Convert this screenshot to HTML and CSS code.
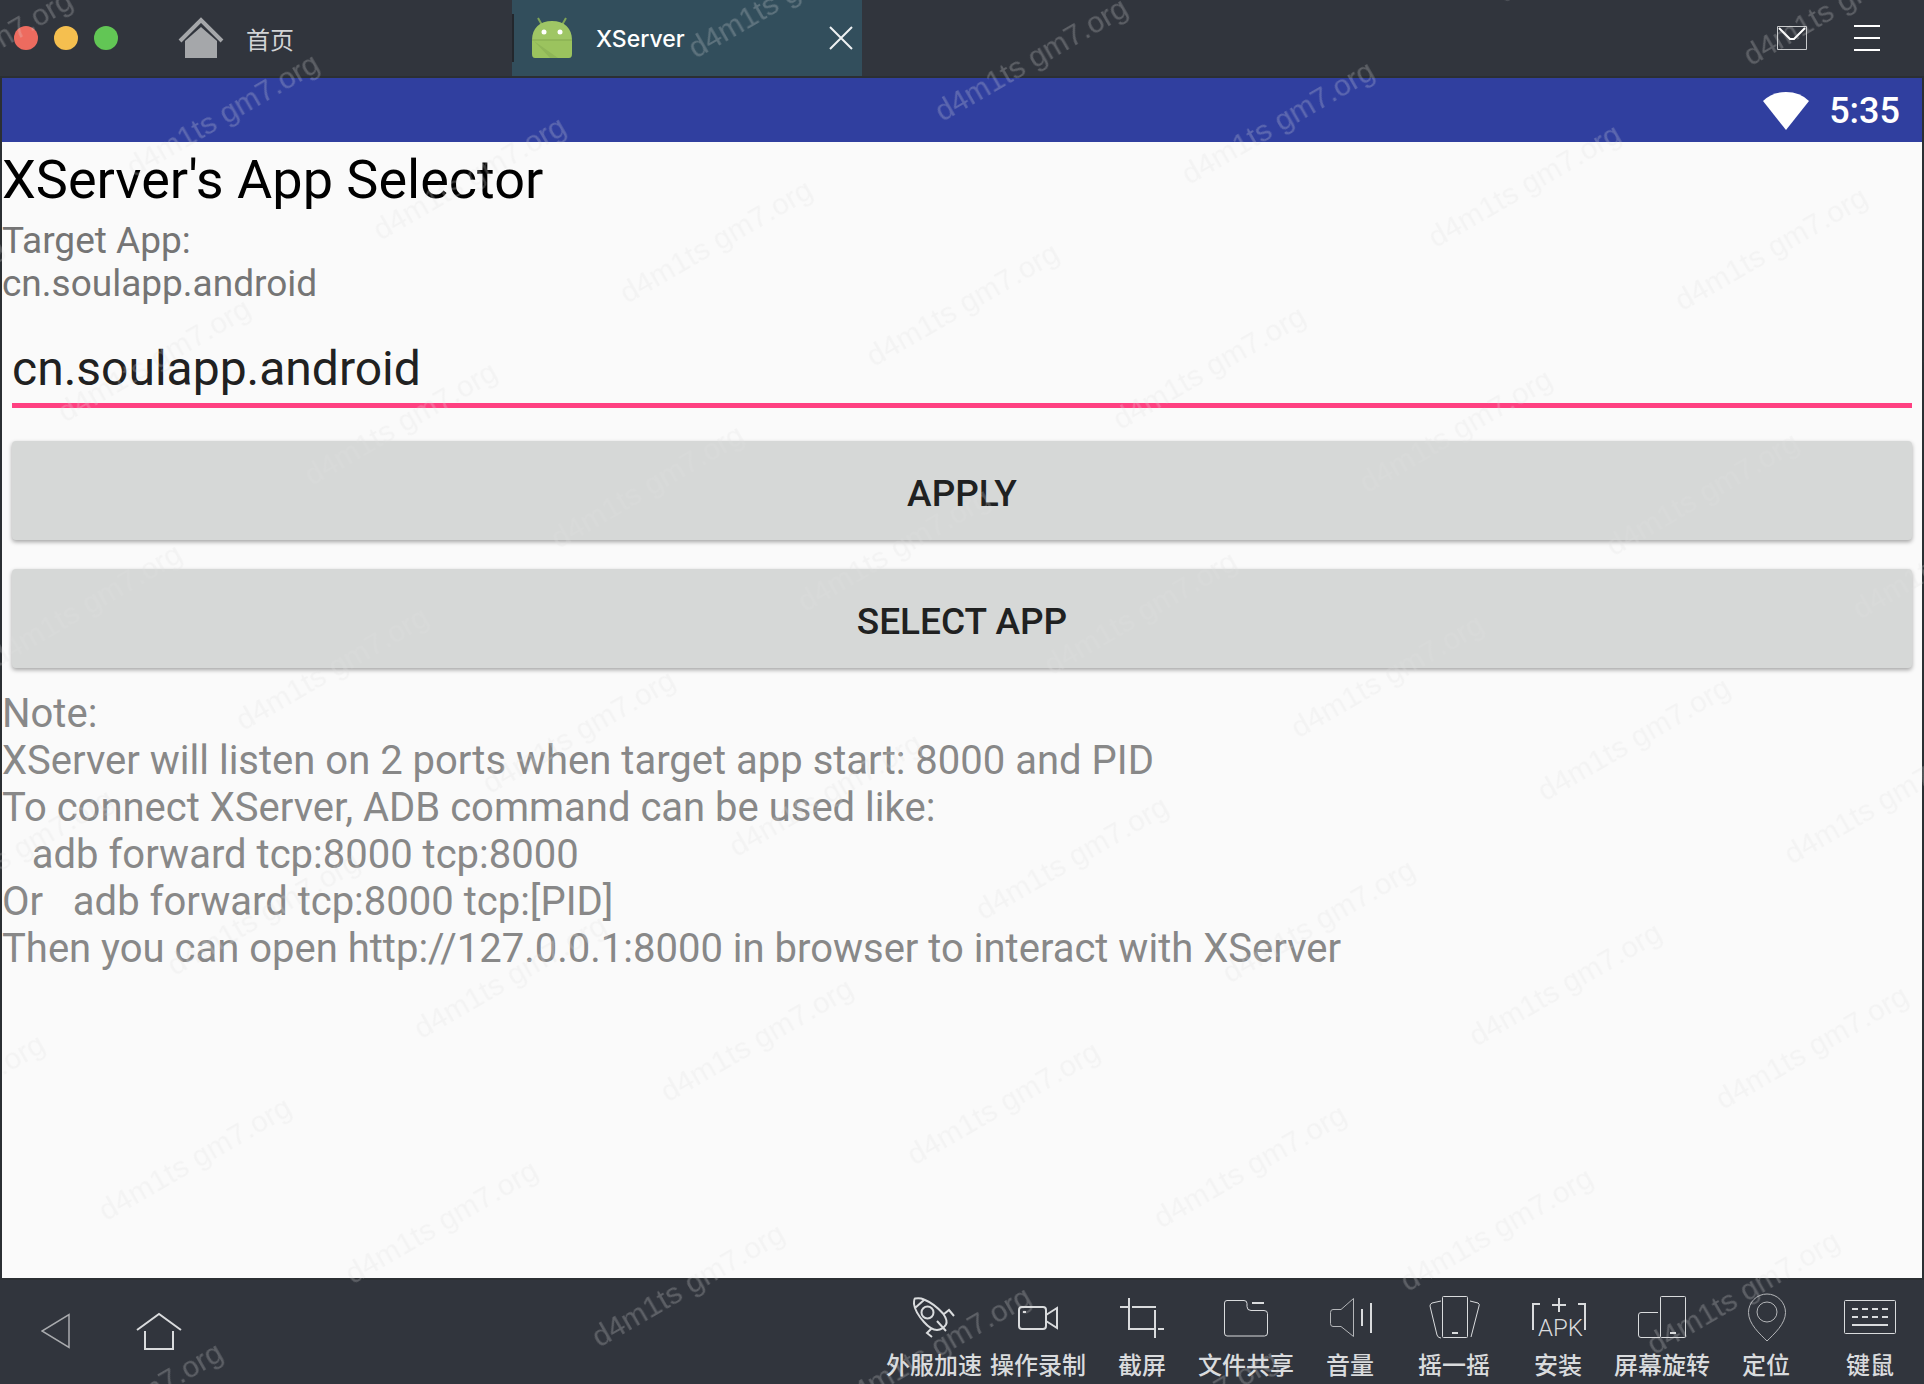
FILE: index.html
```html
<!DOCTYPE html>
<html lang="zh-CN">
<head>
<meta charset="utf-8">
<meta name="viewport" content="width=device-width, initial-scale=1">
<title>XServer</title>
<link rel="stylesheet" href="styles.css">
</head>
<body>
<header class="titlebar">
  <div class="lights">
    <button class="light light-close" aria-label="Close window"></button>
    <button class="light light-min" aria-label="Minimize window"></button>
    <button class="light light-max" aria-label="Zoom window"></button>
  </div>
  <nav class="tabs">
    <a class="tab tab-home" href="#">
      <svg width="46" height="42" viewBox="0 0 46 42" aria-hidden="true"><path d="M7 24 23 10l16 14v17H7z" fill="#a5a7aa"/><path d="M2 24 23 3l21 21" fill="none" stroke="#a5a7aa" stroke-width="4"/></svg>
      <span>首页</span>
    </a>
    <div class="tab tab-active">
      <svg width="40" height="42" viewBox="0 0 40 42" aria-hidden="true"><path d="M6 1l4 7M34 1l-4 7" stroke="#7fa457" stroke-width="2"/><path d="M0 23C0 11 8 4 20 4s20 7 20 19z" fill="#9fc665"/><path d="M0 23h40v14q0 4-3 4H3q-3 0-3-4z" fill="#9bc35e"/><path d="M2 24l16 17h8z" fill="#8fb657"/><path d="M0 23h40" stroke="#83a94f"/><circle cx="12" cy="15" r="2.500" fill="#fff"/><circle cx="28" cy="15" r="2.500" fill="#fff"/></svg>
      <span class="tab-name">XServer</span>
      <button class="icon-button" aria-label="Close tab"><svg width="24" height="24" viewBox="0 0 24 24"><path d="M1 1l22 22M23 1 1 23" stroke="#eef1f3" stroke-width="2"/></svg></button>
    </div>
  </nav>
  <div class="window-actions">
    <button class="icon-button" aria-label="Messages"><svg width="30" height="24" viewBox="0 0 30 24"><path d="M.5.5h29v23H.5z" fill="none" stroke="#c8cacc"/><path d="M2 2l11 11h4L28 2" fill="none" stroke="#fff" stroke-width="2"/></svg></button>
    <button class="icon-button" aria-label="Menu"><svg width="26" height="26" viewBox="0 0 26 26"><path d="M0 1h26M0 13h26M0 25h26" stroke="#fff" stroke-width="2"/></svg></button>
  </div>
</header>

<main class="screen">
  <div class="statusbar">
    <svg width="46" height="38" viewBox="0 0 46 38" aria-hidden="true"><path d="M0 9Q9 0 23 0t23 9L23 38z" fill="#fff"/></svg>
    <time>5:35</time>
  </div>
  <form class="app">
    <h1>XServer's App Selector</h1>
    <label class="target" for="target">Target App:<br>cn.soulapp.android</label>
    <input class="target-input" id="target" type="text" value="cn.soulapp.android" spellcheck="false">
    <div class="actions">
      <button class="action" type="button">APPLY</button>
      <button class="action" type="button">SELECT APP</button>
    </div>
    <p class="note">Note:
XServer will listen on 2 ports when target app start: 8000 and PID
To connect XServer, ADB command can be used like:
   adb forward tcp:8000 tcp:8000
Or   adb forward tcp:8000 tcp:[PID]
Then you can open http://127.0.0.1:8000 in browser to interact with XServer</p>
  </form>
</main>

<footer class="toolbar">
  <div class="nav-keys">
    <button class="icon-button" aria-label="Back"><svg width="30" height="36" viewBox="0 0 30 36"><path d="M28 1.500v33L1 18z" fill="none" stroke="#a9abae" stroke-width="1.500"/></svg></button>
    <button class="icon-button" aria-label="Home"><svg width="46" height="38" viewBox="0 0 46 38"><path d="M1 18 23 2l22 16M9 19v18h28V19" fill="none" stroke="#d9dbdd" stroke-width="2"/></svg></button>
  </div>
  <div class="tools">
    <button class="tool"><svg class="tool-icon bold" viewBox="0 0 52 52"><path d="M7 6.500q5-1 9 1 10 4 19 14 5 7 3 11-3 5-9 5.500-6 0-13-8Q7 20 6 12 6 7 7 6.500zM7 16l9-8M36 22l5-4 5 6M23 37l-4 4 5 4M29 29l9 10"/><circle cx="19.500" cy="20.500" r="6"/></svg><span>外服加速</span></button>
    <button class="tool"><svg class="tool-icon bold" viewBox="0 0 52 52"><rect x="7" y="15" width="27" height="22" rx="3"/><path d="M34 23l11-7v20l-11-7M11 20h3"/></svg><span>操作录制</span></button>
    <button class="tool"><svg class="tool-icon bold" viewBox="0 0 52 52"><path d="M13 6v31h26M4 15h9M16 15h24M39 18v28M42 37h6"/></svg><span>截屏</span></button>
    <button class="tool"><svg class="tool-icon" viewBox="0 0 52 52"><path d="M7 8.500h17q3 0 3 3v3q0 4 4 4h13q3.500 0 3.500 3V41q0 3-3 3H7q-2.500 0-2.500-3V11q0-2.500 2.500-2.500z"/><path class="thick" d="M32 11h12"/></svg><span>文件共享</span></button>
    <button class="tool"><svg class="tool-icon" viewBox="0 0 52 52"><path class="dim" d="M9 17.500h8L29.500 6.500v38L17 34.500H9q-2.500 0-2.500-3v-11q0-3 2.500-3z"/><path class="thick" d="M38 17v17M47 11v30"/></svg><span>音量</span></button>
    <button class="tool"><svg class="tool-icon" viewBox="0 0 52 52"><rect x="14.500" y="4.500" width="25" height="41" rx="1"/><path d="M13 9 4 11q-2 1-2 3l7 29q1 3 4 3M42 9l8 2q2 1 1 3l-8 31"/><path class="thick" d="M24 41h6"/></svg><span>摇一摇</span></button>
    <button class="tool"><svg class="tool-icon bold" viewBox="0 0 52 52"><path d="M8 12H1v26M46 12h7v26M27 6v14M20 13h14"/><text x="6" y="44">APK</text></svg><span>安装</span></button>
    <button class="tool"><svg class="tool-icon" viewBox="0 0 52 52"><rect x="24.500" y="4.500" width="25" height="41" rx="1"/><path d="M22 20.500H5q-2.500 0-2.500 2.500v20q0 2.500 2.500 2.500h19"/><path class="thick" d="M34 41h6"/></svg><span>屏幕旋转</span></button>
    <button class="tool"><svg class="tool-icon" viewBox="0 0 52 52"><path class="dim" d="M27 49C20 42 8.500 32 8.500 20.500a18.500 18.500 0 0 1 37 0C45.500 32 34 42 27 49z"/><circle class="dim" cx="27" cy="20" r="10"/></svg><span>定位</span></button>
    <button class="tool"><svg class="tool-icon" viewBox="0 0 52 52"><rect x=".5" y="8.500" width="51" height="33" rx="1"/><path class="thick" d="M8 17h6m4 0h6m4 0h6m4 0h6M8 25h6m4 0h6m4 0h6m4 0h6M8 33h36"/></svg><span>键鼠</span></button>
  </div>
</footer>

<svg class="watermark" aria-hidden="true">
  <defs>
    <pattern id="mark" width="364" height="356" patternUnits="userSpaceOnUse" patternTransform="rotate(-30)">
      <text x="27" y="221">d4m1ts gm7.org</text>
      <text x="209" y="43">d4m1ts gm7.org</text>
      <text x="-155" y="43">d4m1ts gm7.org</text>
    </pattern>
  </defs>
  <rect width="100%" height="100%" fill="url(#mark)"/>
</svg>
</body>
</html>
```
FILE: styles.css
```css
* {
  box-sizing: border-box;
}

body {
  margin: 0;
  min-height: 100vh;
  display: flex;
  flex-direction: column;
  background: #31353d;
  font-family: Roboto, "Noto Sans CJK SC", sans-serif;
}

button {
  margin: 0;
  padding: 0;
  border: 0;
  background: none;
  color: inherit;
  font: inherit;
  cursor: pointer;
}

svg {
  display: block;
}

/* Window title bar */
.titlebar {
  display: flex;
  align-items: stretch;
  height: 78px;
  border-bottom: 2px solid #2b2f33;
  color: #d2d4d6;
  font-size: 24px;
}

.lights {
  display: flex;
  align-items: center;
  gap: 16px;
  padding-left: 14px;
}

.light {
  width: 24px;
  height: 24px;
  border-radius: 50%;
}

.light-close { background: #ed6b5f; }
.light-min { background: #f5bf4f; }
.light-max { background: #62c655; }

.tabs {
  display: flex;
  margin-left: 60px;
}

.tab {
  display: flex;
  align-items: center;
}

.tab-home {
  width: 334px;
  gap: 22px;
  color: inherit;
  text-decoration: none;
}

.tab-active {
  width: 350px;
  gap: 24px;
  padding: 0 9px 0 20px;
  background: linear-gradient(#23272d, #23272d) left center / 2px 48px no-repeat #324e5c;
  color: #fff;
  font-family: Inter, sans-serif;
  font-size: 23px;
  font-weight: 500;
}

.tab-name {
  flex: 1;
  padding-top: 2px;
}

.window-actions {
  display: flex;
  align-items: center;
  gap: 47px;
  margin-left: auto;
  padding-right: 44px;
}

/* Emulated device screen */
.screen {
  flex: 1;
  border: solid #2b2f33;
  border-width: 0 2px;
  background: #fafafa;
}

.statusbar {
  display: flex;
  justify-content: flex-end;
  align-items: center;
  gap: 20px;
  height: 64px;
  padding: 2px 22px 0 0;
  background: #303f9f;
  color: #fff;
  font-size: 36px;
  font-weight: 500;
}

.app {
  display: flex;
  flex-direction: column;
}

h1 {
  margin: 0 0 2px;
  color: #000;
  font-size: 54px;
  font-weight: 400;
  line-height: 75px;
}

.target {
  color: #757575;
  font-size: 37px;
  line-height: 43px;
}

.target-input {
  margin: 32px 10px 0;
  height: 71px;
  padding: 2px 0 6px;
  border: 0;
  border-bottom: 5px solid #ff4081;
  outline: 0;
  background: none;
  color: #212121;
  font: 48px Roboto, sans-serif;
}

.actions {
  display: flex;
  flex-direction: column;
  gap: 29px;
  padding: 33px 10px 22px;
}

.action {
  height: 99px;
  padding-top: 5px;
  border-radius: 4px;
  background: #d6d8d7;
  box-shadow: 0 2px 4px rgba(0, 0, 0, .35);
  color: #202121;
  font-size: 37px;
  font-weight: 500;
}

.note {
  margin: 0;
  color: #888;
  font-size: 40px;
  line-height: 47px;
  white-space: pre-wrap;
}

/* Bottom tool bar */
.toolbar {
  display: flex;
  justify-content: space-between;
  height: 106px;
  padding: 0 2px 0 41px;
  border-top: 2px solid #2b2f33;
  color: #d9dbdd;
}

.nav-keys {
  display: flex;
  align-items: center;
  gap: 65px;
  padding-bottom: 2px;
}

.tools {
  display: flex;
}

.tool {
  display: flex;
  flex-direction: column;
  align-items: center;
  gap: 8px;
  width: 104px;
  padding-top: 12px;
  font-size: 24px;
  font-weight: 500;
  line-height: 28px;
  white-space: nowrap;
}

.tool-icon {
  width: 52px;
  height: 52px;
  overflow: visible;
  fill: none;
  stroke: #d9dbdd;
  stroke-width: 1;
}

.tool-icon.bold,
.tool-icon .thick {
  stroke-width: 2;
}

.tool-icon .dim {
  stroke: #b4b6b9;
}

.tool-icon text {
  fill: #d9dbdd;
  stroke: none;
  font-size: 24px;
  font-weight: 300;
}

/* Repeating diagonal mark over the whole window */
.watermark {
  position: absolute;
  inset: 0;
  width: 100%;
  height: 100%;
  pointer-events: none;
}

.watermark text {
  fill: rgba(222, 222, 222, .25);
  font: 30px "Liberation Sans", sans-serif;
}
```
